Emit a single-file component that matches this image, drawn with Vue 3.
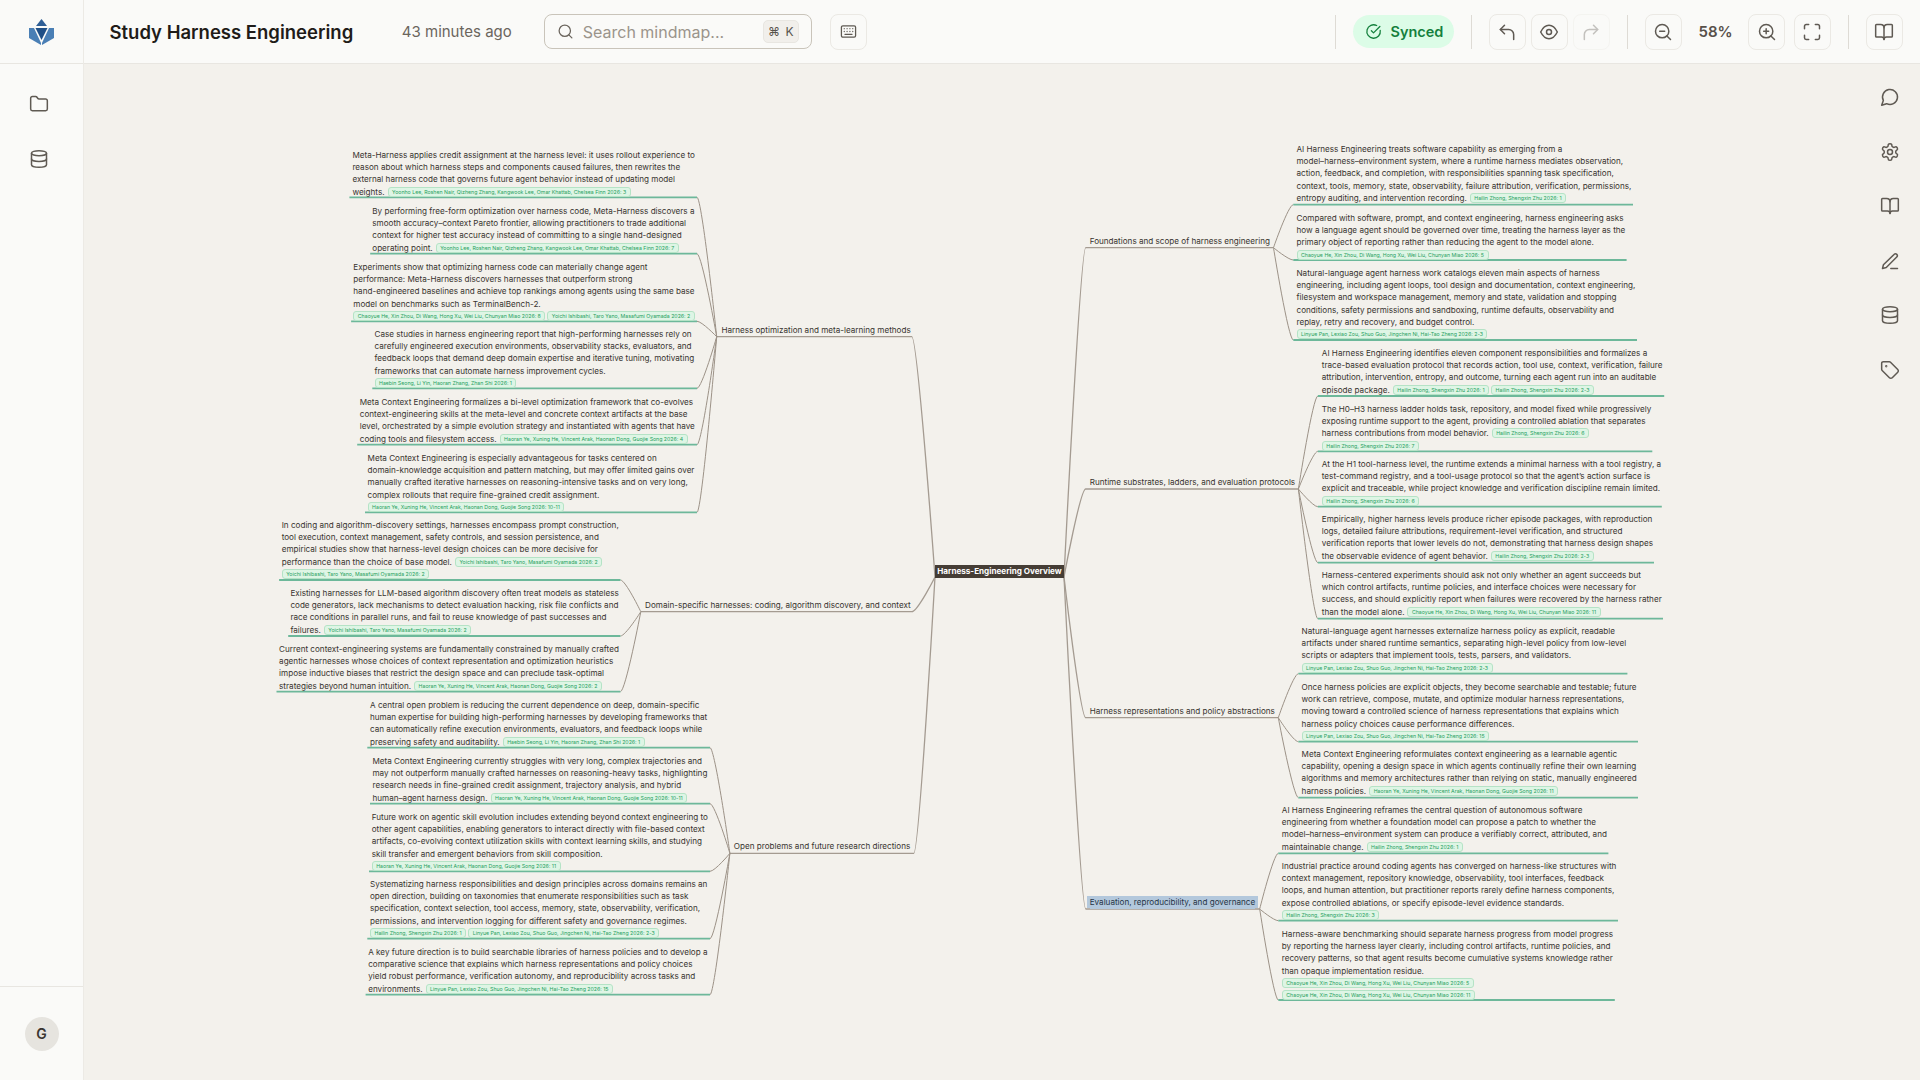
<template>
  <div class="app">
    <aside class="sidebar">
      <div class="logo-cell">
        <svg class="logo" viewBox="0 0 25 26">
          <polygon points="12.5,0 18,7 7,7" fill="#2f5f96" />
          <polygon points="0,9 5,9 12,24 12,26 0,19" fill="#4a7fb5" />
          <polygon points="25,9 20,9 13,24 13,26 25,19" fill="#4a7fb5" />
          <polygon points="6.5,9 18.5,9 12.5,21" fill="#1f4f86" />
        </svg>
      </div>
      <nav class="side-nav">
        <svg class="icon" viewBox="0 0 24 24"><path d="M20 20a2 2 0 0 0 2-2V8a2 2 0 0 0-2-2h-7.900a2 2 0 0 1-1.690-.9L9.600 3.900A2 2 0 0 0 7.930 3H4a2 2 0 0 0-2 2v13a2 2 0 0 0 2 2Z" /></svg>
        <svg class="icon" viewBox="0 0 24 24"><ellipse cx="12" cy="5" rx="9" ry="3" /><path d="M3 5v14a9 3 0 0 0 18 0V5" /><path d="M3 12a9 3 0 0 0 18 0" /></svg>
      </nav>
      <div class="side-foot">
        <div class="avatar">G</div>
      </div>
    </aside>

    <div class="main">
      <header class="topbar">
        <h1 class="title">Study Harness Engineering</h1>
        <span class="saved">43 minutes ago</span>
        <div class="search">
          <svg class="icon search-icon" viewBox="0 0 24 24"><circle cx="11" cy="11" r="8" /><path d="m21 21-4.300-4.300" /></svg>
          <span class="placeholder">Search mindmap...</span>
          <span class="kbd">⌘ K</span>
        </div>
        <button class="tool keys">
          <svg class="icon small" viewBox="0 0 24 24"><rect x="2" y="4" width="20" height="16" rx="2" /><path d="M6 8h.01M10 8h.01M14 8h.01M18 8h.01M6 12h.01M10 12h.01M14 12h.01M18 12h.01M7 16h10" /></svg>
        </button>

        <div class="spacer"></div>

        <span class="divider"></span>
        <span class="synced">
          <svg class="icon small" viewBox="0 0 24 24"><path d="M21.500 10.500a9.500 9.500 0 1 1-5-6.900" /><path d="m9 11 3 3 9-9" /></svg>
          Synced
        </span>
        <span class="divider"></span>
        <div class="group">
          <button class="tool"><svg class="icon" viewBox="0 0 24 24"><path d="M9 14 4 9l5-5" /><path d="M4 9h10a6 6 0 0 1 6 6v6" /></svg></button>
          <button class="tool"><svg class="icon" viewBox="0 0 24 24"><path d="M2 12c2.500-5 6-8 10-8s7.500 3 10 8c-2.500 5-6 8-10 8s-7.500-3-10-8Z" /><circle cx="12" cy="12" r="3" /></svg></button>
          <button class="tool off"><svg class="icon" viewBox="0 0 24 24"><path d="m15 14 5-5-5-5" /><path d="M20 9H10a6 6 0 0 0-6 6v6" /></svg></button>
        </div>
        <span class="divider"></span>
        <button class="tool"><svg class="icon" viewBox="0 0 24 24"><circle cx="11" cy="11" r="8" /><path d="m21 21-4.300-4.300M8 11h6" /></svg></button>
        <span class="zoom-value">58%</span>
        <div class="group wide">
          <button class="tool"><svg class="icon" viewBox="0 0 24 24"><circle cx="11" cy="11" r="8" /><path d="m21 21-4.300-4.300M8 11h6M11 8v6" /></svg></button>
          <button class="tool"><svg class="icon" viewBox="0 0 24 24"><path d="M8 3H5a2 2 0 0 0-2 2v3M21 8V5a2 2 0 0 0-2-2h-3M3 16v3a2 2 0 0 0 2 2h3M16 21h3a2 2 0 0 0 2-2v-3" /></svg></button>
        </div>
        <span class="divider"></span>
        <button class="tool"><svg class="icon" viewBox="0 0 24 24"><path d="M12 7v14" /><path d="M3 18a1 1 0 0 1-1-1V4a1 1 0 0 1 1-1h5a4 4 0 0 1 4 4 4 4 0 0 1 4-4h5a1 1 0 0 1 1 1v13a1 1 0 0 1-1 1h-6a3 3 0 0 0-3 3 3 3 0 0 0-3-3z" /></svg></button>
      </header>

      <section class="canvas">
        <svg class="links" width="1836" height="1016" viewBox="84 64 1836 1016">
          <path v-for="(d, i) in mainLinks" :key="'m' + i" :d="d" class="main-link" />
          <path v-for="(d, i) in leafLinks" :key="'l' + i" :d="d" class="leaf-link" />
          <path v-for="(d, i) in leafLines" :key="'u' + i" :d="d" class="leaf-line" />
        </svg>

        <div class="root" :style="place(935, 565)">Harness-Engineering Overview</div>

        <template v-for="b in branches" :key="b.label">
          <div class="branch" :class="{ selected: b.selected }" :style="place(b.x, b.y - 6)">{{ b.label }}</div>
          <div v-for="leaf in b.leaves" :key="leaf.y" class="leaf" :style="place(leaf.x, leaf.y - 6)">
            <div v-for="(line, i) in leaf.lines" :key="i" class="row">
              <span>{{ line }}</span>
              <template v-if="i === leaf.lines.length - 1">
                <span v-for="c in leaf.inline" :key="c" class="cite">{{ c }}</span>
              </template>
            </div>
            <div v-for="(row, i) in leaf.below" :key="'b' + i" class="row">
              <span v-for="c in row" :key="c" class="cite">{{ c }}</span>
            </div>
          </div>
        </template>

        <div class="rail">
          <svg class="icon" viewBox="0 0 24 24"><path d="M7.900 20A9 9 0 1 0 4 16.100L2 22Z" /></svg>
          <svg class="icon" viewBox="0 0 24 24"><path d="M12.220 2h-.44a2 2 0 0 0-2 2v.18a2 2 0 0 1-1 1.730l-.43.250a2 2 0 0 1-2 0l-.15-.08a2 2 0 0 0-2.730.730l-.22.380a2 2 0 0 0 .730 2.730l.15.100a2 2 0 0 1 1 1.720v.510a2 2 0 0 1-1 1.740l-.15.090a2 2 0 0 0-.730 2.730l.22.380a2 2 0 0 0 2.730.730l.15-.08a2 2 0 0 1 2 0l.43.250a2 2 0 0 1 1 1.730V20a2 2 0 0 0 2 2h.44a2 2 0 0 0 2-2v-.18a2 2 0 0 1 1-1.730l.43-.250a2 2 0 0 1 2 0l.15.080a2 2 0 0 0 2.730-.730l.22-.390a2 2 0 0 0-.730-2.730l-.15-.080a2 2 0 0 1-1-1.740v-.500a2 2 0 0 1 1-1.740l.15-.090a2 2 0 0 0 .730-2.730l-.22-.380a2 2 0 0 0-2.730-.730l-.15.080a2 2 0 0 1-2 0l-.43-.250a2 2 0 0 1-1-1.730V4a2 2 0 0 0-2-2z" /><circle cx="12" cy="12" r="3" /></svg>
          <svg class="icon" viewBox="0 0 24 24"><path d="M12 7v14" /><path d="M3 18a1 1 0 0 1-1-1V4a1 1 0 0 1 1-1h5a4 4 0 0 1 4 4 4 4 0 0 1 4-4h5a1 1 0 0 1 1 1v13a1 1 0 0 1-1 1h-6a3 3 0 0 0-3 3 3 3 0 0 0-3-3z" /></svg>
          <svg class="icon" viewBox="0 0 24 24"><path d="M13 21h8" /><path d="M17.200 3.800a2.300 2.300 0 0 1 3.200 3.200L7.500 19.900 3 21l1.100-4.500Z" /></svg>
          <svg class="icon" viewBox="0 0 24 24"><ellipse cx="12" cy="5" rx="9" ry="3" /><path d="M3 5v14a9 3 0 0 0 18 0V5" /><path d="M3 12a9 3 0 0 0 18 0" /></svg>
          <svg class="icon" viewBox="0 0 24 24"><path d="M12.600 2.600A2 2 0 0 0 11.200 2H4a2 2 0 0 0-2 2v7.200a2 2 0 0 0 .6 1.400l8.700 8.700a2.400 2.400 0 0 0 3.400 0l6.600-6.600a2.400 2.400 0 0 0 0-3.400z" /><circle cx="7.500" cy="7.500" r=".5" /></svg>
        </div>
      </section>
    </div>
  </div>
</template>

<script setup>
const META = 'Yoonho Lee, Roshen Nair, Qizheng Zhang, Kangwook Lee, Omar Khattab, Chelsea Finn 2026: '
const CHAOYUE = 'Chaoyue He, Xin Zhou, Di Wang, Hong Xu, Wei Liu, Chunyan Miao 2026: '
const YOICHI = 'Yoichi Ishibashi, Taro Yano, Masafumi Oyamada 2026: '
const HAEBIN = 'Haebin Seong, Li Yin, Haoran Zhang, Zhan Shi 2026: '
const HAORAN = 'Haoran Ye, Xuning He, Vincent Arak, Haonan Dong, Guojie Song 2026: '
const HAILIN = 'Hailin Zhong, Shengxin Zhu 2026: '
const LINYUE = 'Linyue Pan, Lexiao Zou, Shuo Guo, Jingchen Ni, Hai-Tao Zheng 2026: '

// all coordinates are page pixels, place() takes off the sidebar and topbar
const branches = [
  {
    label: 'Harness optimization and meta-learning methods',
    side: 'left', x: 721.4, y: 330, a: 716.7, b: 911.8, uy: 336.7,
    leaves: [
      { x: 352.4, y: 155, uy: 197.3, ua: 349.4, ub: 697, inline: [META + '3'], lines: [
        'Meta-Harness applies credit assignment at the harness level: it uses rollout experience to',
        'reason about which harness steps and components caused failures, then rewrites the',
        'external harness code that governs future agent behavior instead of updating model',
        'weights.'] },
      { x: 372.3, y: 211, uy: 253.7, ua: 370.2, ub: 697, inline: [META + '7'], lines: [
        'By performing free-form optimization over harness code, Meta-Harness discovers a',
        'smooth accuracy–context Pareto frontier, allowing practitioners to trade additional',
        'context for higher test accuracy instead of committing to a single hand-designed',
        'operating point.'] },
      { x: 353.3, y: 267, uy: 321.3, ua: 351.1, ub: 697, below: [[CHAOYUE + '8', YOICHI + '2']], lines: [
        'Experiments show that optimizing harness code can materially change agent',
        'performance: Meta-Harness discovers harnesses that outperform strong',
        'hand-engineered baselines and achieve top rankings among agents using the same base',
        'model on benchmarks such as TerminalBench-2.'] },
      { x: 374.5, y: 334, uy: 388.3, ua: 372.3, ub: 697, below: [[HAEBIN + '1']], lines: [
        'Case studies in harness engineering report that high-performing harnesses rely on',
        'carefully engineered execution environments, observability stacks, evaluators, and',
        'feedback loops that demand deep domain expertise and iterative tuning, motivating',
        'frameworks that can automate harness improvement cycles.'] },
      { x: 359.8, y: 402, uy: 444.7, ua: 357.2, ub: 697, inline: [HAORAN + '4'], lines: [
        'Meta Context Engineering formalizes a bi-level optimization framework that co-evolves',
        'context-engineering skills at the meta-level and concrete context artifacts at the base',
        'level, orchestrated by a simple evolution strategy and instantiated with agents that have',
        'coding tools and filesystem access.'] },
      { x: 367.6, y: 458, uy: 512.3, ua: 365, ub: 697, below: [[HAORAN + '10-11']], lines: [
        'Meta Context Engineering is especially advantageous for tasks centered on',
        'domain-knowledge acquisition and pattern matching, but may offer limited gains over',
        'manually crafted iterative harnesses on reasoning-intensive tasks and on very long,',
        'complex rollouts that require fine-grained credit assignment.'] },
    ],
  },
  {
    label: 'Domain-specific harnesses: coding, algorithm discovery, and context',
    side: 'left', x: 645.1, y: 605, a: 640.8, b: 911.8, uy: 611.7,
    leaves: [
      { x: 281.7, y: 525, uy: 580, ua: 279.1, ub: 620.4, inline: [YOICHI + '2'], below: [[YOICHI + '2']], lines: [
        'In coding and algorithm-discovery settings, harnesses encompass prompt construction,',
        'tool execution, context management, safety controls, and session persistence, and',
        'empirical studies show that harness-level design choices can be more decisive for',
        'performance than the choice of base model.'] },
      { x: 290.4, y: 593, uy: 636, ua: 288.2, ub: 620.4, inline: [YOICHI + '2'], lines: [
        'Existing harnesses for LLM-based algorithm discovery often treat models as stateless',
        'code generators, lack mechanisms to detect evaluation hacking, risk file conflicts and',
        'race conditions in parallel runs, and fail to reuse knowledge of past successes and',
        'failures.'] },
      { x: 279.1, y: 649, uy: 691.7, ua: 276.5, ub: 620.4, inline: [HAORAN + '2'], lines: [
        'Current context-engineering systems are fundamentally constrained by manually crafted',
        'agentic harnesses whose choices of context representation and optimization heuristics',
        'impose inductive biases that restrict the design space and can preclude task-optimal',
        'strategies beyond human intuition.'] },
    ],
  },
  {
    label: 'Open problems and future research directions',
    side: 'left', x: 733.8, y: 846, a: 729.9, b: 913.8, uy: 853.3,
    leaves: [
      { x: 370, y: 705, uy: 747.7, ua: 367.3, ub: 710, inline: [HAEBIN + '1'], lines: [
        'A central open problem is reducing the current dependence on deep, domain-specific',
        'human expertise for building high-performing harnesses by developing frameworks that',
        'can automatically refine execution environments, evaluators, and feedback loops while',
        'preserving safety and auditability.'] },
      { x: 372.5, y: 761, uy: 803.7, ua: 370, ub: 710, inline: [HAORAN + '10-11'], lines: [
        'Meta Context Engineering currently struggles with very long, complex trajectories and',
        'may not outperform manually crafted harnesses on reasoning-heavy tasks, highlighting',
        'research needs in fine-grained credit assignment, trajectory analysis, and hybrid',
        'human–agent harness design.'] },
      { x: 371.7, y: 817, uy: 871.3, ua: 369, ub: 710, below: [[HAORAN + '11']], lines: [
        'Future work on agentic skill evolution includes extending beyond context engineering to',
        'other agent capabilities, enabling generators to interact directly with file-based context',
        'artifacts, co-evolving context utilization skills with context learning skills, and studying',
        'skill transfer and emergent behaviors from skill composition.'] },
      { x: 370, y: 884, uy: 938.7, ua: 367.3, ub: 710, below: [[HAILIN + '1', LINYUE + '2-3']], lines: [
        'Systematizing harness responsibilities and design principles across domains remains an',
        'open direction, building on taxonomies that enumerate responsibilities such as task',
        'specification, context selection, tool access, memory, state, observability, verification,',
        'permissions, and intervention logging for different safety and governance regimes.'] },
      { x: 368.2, y: 952, uy: 994.7, ua: 365.6, ub: 710, inline: [LINYUE + '15'], lines: [
        'A key future direction is to build searchable libraries of harness policies and to develop a',
        'comparative science that explains which harness representations and policy choices',
        'yield robust performance, verification autonomy, and reproducibility across tasks and',
        'environments.'] },
    ],
  },
  {
    label: 'Foundations and scope of harness engineering',
    side: 'right', x: 1089.7, y: 241, a: 1085.7, b: 1273.5, uy: 247.7,
    leaves: [
      { x: 1296.5, y: 149, uy: 204.7, ua: 1293.3, ub: 1633, inline: [HAILIN + '1'], lines: [
        'AI Harness Engineering treats software capability as emerging from a',
        'model–harness–environment system, where a runtime harness mediates observation,',
        'action, feedback, and completion, with responsibilities spanning task specification,',
        'context, tools, memory, state, observability, failure attribution, verification, permissions,',
        'entropy auditing, and intervention recording.'] },
      { x: 1296.5, y: 218, uy: 260, ua: 1293.3, ub: 1626.6, below: [[CHAOYUE + '5']], lines: [
        'Compared with software, prompt, and context engineering, harness engineering asks',
        'how a language agent should be governed over time, treating the harness layer as the',
        'primary object of reporting rather than reducing the agent to the model alone.'] },
      { x: 1296.5, y: 273, uy: 340, ua: 1293.3, ub: 1637, below: [[LINYUE + '2-3']], lines: [
        'Natural-language agent harness work catalogs eleven main aspects of harness',
        'engineering, including agent loops, tool design and documentation, context engineering,',
        'filesystem and workspace management, memory and state, validation and stopping',
        'conditions, safety permissions and sandboxing, runtime defaults, observability and',
        'replay, retry and recovery, and budget control.'] },
    ],
  },
  {
    label: 'Runtime substrates, ladders, and evaluation protocols',
    side: 'right', x: 1089.7, y: 482, a: 1085.7, b: 1298.4, uy: 489,
    leaves: [
      { x: 1321.8, y: 353, uy: 396, ua: 1317.8, ub: 1664.2, inline: [HAILIN + '1', HAILIN + '2-3'], lines: [
        'AI Harness Engineering identifies eleven component responsibilities and formalizes a',
        'trace-based evaluation protocol that records action, tool use, context, verification, failure',
        'attribution, intervention, entropy, and outcome, turning each agent run into an auditable',
        'episode package.'] },
      { x: 1321.8, y: 409, uy: 451.3, ua: 1317.8, ub: 1652.3, inline: [HAILIN + '6'], below: [[HAILIN + '7']], lines: [
        'The H0–H3 harness ladder holds task, repository, and model fixed while progressively',
        'exposing runtime support to the agent, providing a controlled ablation that separates',
        'harness contributions from model behavior.'] },
      { x: 1321.8, y: 464, uy: 506.7, ua: 1317.8, ub: 1661.8, below: [[HAILIN + '6']], lines: [
        'At the H1 tool-harness level, the runtime extends a minimal harness with a tool registry, a',
        'test-command registry, and a tool-usage protocol so that the agent’s action surface is',
        'explicit and traceable, while project knowledge and verification discipline remain limited.'] },
      { x: 1321.8, y: 519, uy: 562.7, ua: 1317.8, ub: 1654, inline: [HAILIN + '2-3'], lines: [
        'Empirically, higher harness levels produce richer episode packages, with reproduction',
        'logs, detailed failure attributions, requirement-level verification, and structured',
        'verification reports that lower levels do not, demonstrating that harness design shapes',
        'the observable evidence of agent behavior.'] },
      { x: 1321.8, y: 575, uy: 618.7, ua: 1317.8, ub: 1663, inline: [CHAOYUE + '11'], lines: [
        'Harness-centered experiments should ask not only whether an agent succeeds but',
        'which control artifacts, runtime policies, and interface choices were necessary for',
        'success, and should explicitly report when failures were recovered by the harness rather',
        'than the model alone.'] },
    ],
  },
  {
    label: 'Harness representations and policy abstractions',
    side: 'right', x: 1089.7, y: 711, a: 1085.7, b: 1278.3, uy: 717.7,
    leaves: [
      { x: 1301.6, y: 631, uy: 673.7, ua: 1298.4, ub: 1627.4, below: [[LINYUE + '2-3']], lines: [
        'Natural-language agent harnesses externalize harness policy as explicit, readable',
        'artifacts under shared runtime semantics, separating high-level policy from low-level',
        'scripts or adapters that implement tools, tests, parsers, and validators.'] },
      { x: 1301.6, y: 687, uy: 741.7, ua: 1298.4, ub: 1638, below: [[LINYUE + '15']], lines: [
        'Once harness policies are explicit objects, they become searchable and testable; future',
        'work can retrieve, compose, mutate, and optimize modular harness representations,',
        'moving toward a controlled science of harness representations that explains which',
        'harness policy choices cause performance differences.'] },
      { x: 1301.6, y: 754, uy: 797.7, ua: 1298.4, ub: 1638, inline: [HAORAN + '11'], lines: [
        'Meta Context Engineering reformulates context engineering as a learnable agentic',
        'capability, opening a design space in which agents continually refine their own learning',
        'algorithms and memory architectures rather than relying on static, manually engineered',
        'harness policies.'] },
    ],
  },
  {
    label: 'Evaluation, reproducibility, and governance',
    side: 'right', selected: true, x: 1089.7, y: 902, a: 1085.7, b: 1259.7, uy: 909,
    leaves: [
      { x: 1281.8, y: 810, uy: 853.3, ua: 1278.3, ub: 1608.4, inline: [HAILIN + '1'], lines: [
        'AI Harness Engineering reframes the central question of autonomous software',
        'engineering from whether a foundation model can propose a patch to whether the',
        'model–harness–environment system can produce a verifiably correct, attributed, and',
        'maintainable change.'] },
      { x: 1281.8, y: 866, uy: 920.7, ua: 1278.3, ub: 1618, below: [[HAILIN + '3']], lines: [
        'Industrial practice around coding agents has converged on harness-like structures with',
        'context management, repository knowledge, observability, tool interfaces, feedback',
        'loops, and human attention, but practitioner reports rarely define harness components,',
        'expose controlled ablations, or specify episode-level evidence standards.'] },
      { x: 1281.8, y: 934, uy: 1000, ua: 1278.3, ub: 1614.8, below: [[CHAOYUE + '5'], [CHAOYUE + '11']], lines: [
        'Harness-aware benchmarking should separate harness progress from model progress',
        'by reporting the harness layer clearly, including control artifacts, runtime policies, and',
        'recovery patterns, so that agent results become cumulative systems knowledge rather',
        'than opaque implementation residue.'] },
    ],
  },
]

function place(x, y) {
  return { left: x - 84 + 'px', top: y - 64 + 'px' }
}

function curve(x1, y1, x2, y2) {
  const cx = x1 + (x2 - x1) * 0.75
  return `M ${x1} ${y1} C ${x1} ${y1} ${cx} ${y2} ${x2} ${y2}`
}

const mainLinks = []
const leafLinks = []
const leafLines = []

for (const b of branches) {
  const left = b.side === 'left'
  const joint = left ? b.a : b.b
  mainLinks.push(
    curve(left ? 935 : 1064, 577, left ? b.b : b.a, b.uy) + ` H ${left ? b.a : b.b}`,
  )
  for (const leaf of b.leaves) {
    leafLinks.push(curve(joint, b.uy, left ? leaf.ub : leaf.ua, leaf.uy))
    leafLines.push(`M ${leaf.ua} ${leaf.uy} H ${leaf.ub}`)
  }
}
</script>

<style>
html, body {
  margin: 0;
  padding: 0;
  background: #f3f1ec;
}
</style>

<style scoped>
.app {
  display: flex;
  width: 1920px;
  height: 1080px;
  overflow: hidden;
  font-family: Inter, "Liberation Sans", sans-serif;
  color: #2a2723;
}
.sidebar {
  width: 84px;
  flex: none;
  display: flex;
  flex-direction: column;
  background: #fafaf8;
  border-right: 1px solid #eceae5;
  box-sizing: border-box;
}
.logo-cell {
  height: 64px;
  flex: none;
  display: flex;
  align-items: center;
  justify-content: center;
  border-bottom: 1px solid #e8e6e1;
  box-sizing: border-box;
}
.logo {
  width: 25px;
  height: 26px;
}
.side-nav {
  flex: 1;
  display: flex;
  flex-direction: column;
  align-items: center;
  gap: 35px;
  padding: 30px 5px 0 0;
}
.side-foot {
  height: 93px;
  flex: none;
  display: flex;
  align-items: center;
  justify-content: center;
  border-top: 1px solid #e8e6e1;
}
.avatar {
  width: 34px;
  height: 34px;
  border-radius: 50%;
  background: #e6e4df;
  display: flex;
  align-items: center;
  justify-content: center;
  font-size: 14px;
  font-weight: 600;
  color: #3a3631;
}
.icon {
  width: 20px;
  height: 20px;
  flex: none;
  fill: none;
  stroke: #5f5a53;
  stroke-width: 1.800;
  stroke-linecap: round;
  stroke-linejoin: round;
}
.icon.small {
  width: 17px;
  height: 17px;
}
.main {
  flex: 1;
  min-width: 0;
  display: flex;
  flex-direction: column;
}
.topbar {
  height: 64px;
  flex: none;
  display: flex;
  align-items: center;
  padding: 0 17.5px 0 25.5px;
  background: #fafaf8;
  border-bottom: 1px solid #e8e6e1;
  box-sizing: border-box;
}
.title {
  margin: 0 48.600px 0 0;
  font-size: 18.500px;
  font-weight: 600;
  color: #1f1c19;
  white-space: nowrap;
}
.saved {
  font-size: 15px;
  color: #6b655d;
  margin-right: 32px;
  white-space: nowrap;
}
.search {
  width: 268px;
  height: 35px;
  display: flex;
  align-items: center;
  border: 1px solid #c9c4ba;
  border-radius: 8px;
  padding: 0 12px;
  box-sizing: border-box;
  margin-right: 18px;
}
.search-icon {
  width: 17px;
  height: 17px;
  stroke: #6b655d;
  margin-right: 9px;
}
.placeholder {
  flex: 1;
  font-size: 16px;
  color: #9a948b;
  white-space: nowrap;
}
.kbd {
  width: 36px;
  height: 23px;
  background: #f1efeb;
  border: 1px solid #e8e6e1;
  border-radius: 5px;
  box-sizing: border-box;
  display: flex;
  align-items: center;
  justify-content: center;
  font-size: 12px;
  word-spacing: 2px;
  color: #57524b;
}
.tool {
  width: 37px;
  height: 36px;
  padding: 0;
  flex: none;
  display: flex;
  align-items: center;
  justify-content: center;
  background: transparent;
  border: 1px solid #ebe9e4;
  border-radius: 8px;
}
.tool.off {
  opacity: 0.35;
}
.spacer {
  flex: 1;
}
.divider {
  width: 1px;
  height: 34px;
  flex: none;
  background: #dedbd5;
  margin: 0 17px;
}
.synced {
  display: flex;
  align-items: center;
  gap: 9px;
  width: 101px;
  height: 33px;
  flex: none;
  box-sizing: border-box;
  padding-left: 12px;
  border-radius: 17px;
  background: #dcfce7;
  color: #15803d;
  font-size: 14.500px;
  font-weight: 600;
}
.synced .icon {
  stroke: #15803d;
}
.group {
  display: flex;
  gap: 5px;
}
.group.wide {
  gap: 8.500px;
}
.zoom-value {
  width: 32.500px;
  margin: 0 17px;
  font-size: 15px;
  font-weight: 600;
  color: #57504a;
  text-align: center;
}
.canvas {
  position: relative;
  flex: 1;
  background: #f3f1ec;
  overflow: hidden;
}
.links {
  position: absolute;
  left: 0;
  top: 0;
  fill: none;
}
.main-link {
  stroke: #a49b91;
  stroke-width: 1.300;
}
.leaf-link {
  stroke: #9c9287;
  stroke-width: 1;
}
.leaf-line {
  stroke: #6db89a;
  stroke-width: 1.800;
}
.root {
  position: absolute;
  height: 13px;
  width: 129px;
  box-sizing: border-box;
  background: #453d35;
  color: #fff;
  font-size: 8.120px;
  font-weight: 700;
  line-height: 13px;
  text-align: center;
  white-space: nowrap;
}
.branch {
  position: absolute;
  font-size: 8.120px;
  line-height: 12px;
  color: #38342f;
  white-space: nowrap;
}
.branch.selected {
  background: #b3c8dc;
  box-shadow: -3px 0 0 #b3c8dc, 3px 0 0 #b3c8dc, 0 1px 0 #b3c8dc;
  color: #263545;
}
.leaf {
  position: absolute;
  font-size: 8.120px;
  line-height: 12.180px;
  color: #38342f;
  white-space: nowrap;
}
.row {
  display: flex;
  align-items: center;
  gap: 2px;
  height: 12.180px;
}
.row > span:not(.cite) {
  margin-right: 1px;
}
.cite {
  font-size: 5.220px;
  line-height: 8px;
  padding: 0 3.500px;
  background: #def5e5;
  border: 1px solid #b5e3c6;
  border-radius: 3px;
  color: #27a060;
}
.rail {
  position: absolute;
  right: 20px;
  top: 23px;
  display: flex;
  flex-direction: column;
  gap: 34.500px;
}
</style>
